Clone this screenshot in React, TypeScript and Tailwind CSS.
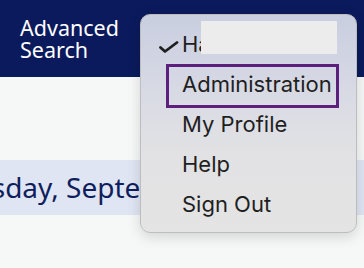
import { ReactNode } from "react";

function MenuItem({ children }: { children: ReactNode }) {
  return (
    <li className="relative h-[40px] pl-[41px] leading-[40px] whitespace-nowrap">{children}</li>
  );
}

export default function App() {
  return (
    <div className="relative w-[364px] h-[268px] overflow-hidden bg-[#f6f7f7]">
      {/* Kopfzeile */}
      <header className="h-[77px] bg-[#0b1a5c] pl-5 pt-[17px]">
        <div className="font-['Noto_Sans',sans-serif] text-[21.5px] leading-[21.5px] text-white">
          Advanced
          <br />
          Search
        </div>
      </header>

      {/* Datumsband */}
      <div className="mt-[83px] h-[55px] bg-[#dfe5f2] overflow-hidden whitespace-nowrap">
        <span className="block -ml-[70px] font-['Noto_Sans',sans-serif] text-[28px] leading-[55px] text-[#0f1e5c]">
          Thursday, September 12, 2024
        </span>
      </div>

      {/* Benutzermenü */}
      <div className="absolute left-[140px] top-[14px] w-[217px] h-[219px] rounded-[10px] border border-[#bdbdbd] bg-[linear-gradient(180deg,#c9cee0_0%,#d3d6e3_25%,#dcdde4_45%,#e2e2e4_65%,#e4e4e4_100%)] shadow-[0_4px_14px_rgba(0,0,0,0.14)]">
        <ul className="pt-[9px] font-['Inter',sans-serif] text-[22px] text-[#1f1f1f]">
          <MenuItem>
            <svg
              className="absolute left-[18px] top-[17px]"
              width="20"
              height="12"
              viewBox="0 0 20 12"
              fill="none"
              stroke="#1f1f1f"
              strokeWidth="2.8"
              strokeLinecap="round"
              strokeLinejoin="round"
            >
              <path d="M1.5 6.5 L6 10.5 L18 1.5" />
            </svg>
            Harold
            <span className="absolute left-[60px] top-[-3px] w-[136px] h-[33px] bg-[#ececec]" />
          </MenuItem>
          <MenuItem>
            <span className="absolute left-[25px] top-0 w-[173px] h-[44px] border-[3px] border-[#5c1f7e]" />
            Administration
          </MenuItem>
          <MenuItem>My Profile</MenuItem>
          <MenuItem>Help</MenuItem>
          <MenuItem>Sign Out</MenuItem>
        </ul>
      </div>
    </div>
  );
}
